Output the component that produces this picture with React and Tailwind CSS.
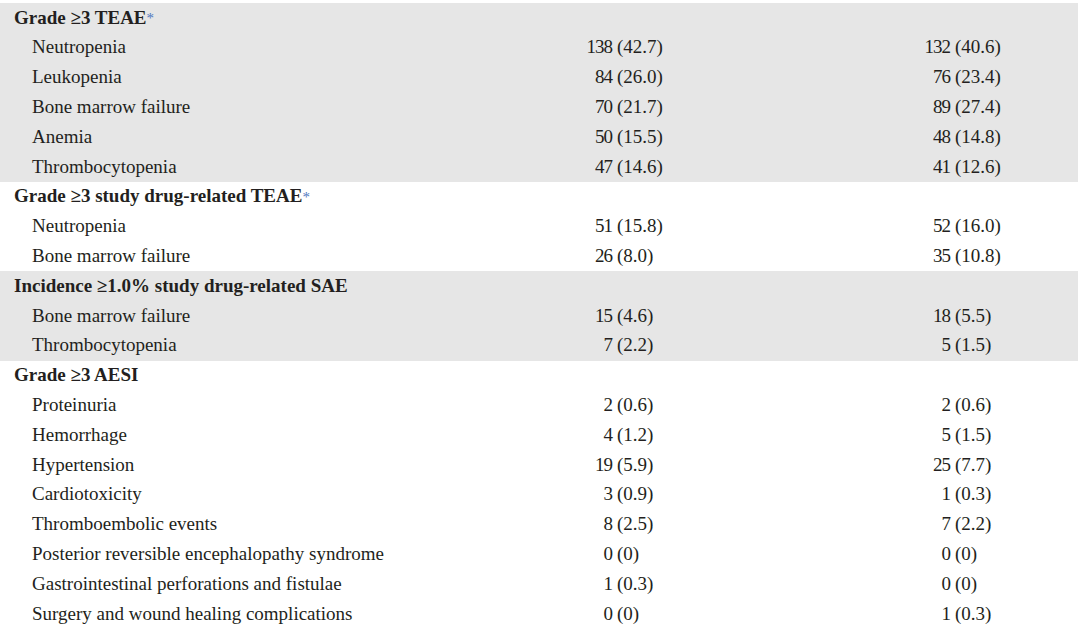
import React from 'react';

const sections = [
  {
    title: 'Grade \u22653 TEAE',
    star: true,
    shaded: true,
    rows: [
      ['Neutropenia', '138', '42.7', '132', '40.6'],
      ['Leukopenia', '84', '26.0', '76', '23.4'],
      ['Bone marrow failure', '70', '21.7', '89', '27.4'],
      ['Anemia', '50', '15.5', '48', '14.8'],
      ['Thrombocytopenia', '47', '14.6', '41', '12.6'],
    ],
  },
  {
    title: 'Grade \u22653 study drug-related TEAE',
    star: true,
    shaded: false,
    rows: [
      ['Neutropenia', '51', '15.8', '52', '16.0'],
      ['Bone marrow failure', '26', '8.0', '35', '10.8'],
    ],
  },
  {
    title: 'Incidence \u22651.0% study drug-related SAE',
    star: false,
    shaded: true,
    rows: [
      ['Bone marrow failure', '15', '4.6', '18', '5.5'],
      ['Thrombocytopenia', '7', '2.2', '5', '1.5'],
    ],
  },
  {
    title: 'Grade \u22653 AESI',
    star: false,
    shaded: false,
    rows: [
      ['Proteinuria', '2', '0.6', '2', '0.6'],
      ['Hemorrhage', '4', '1.2', '5', '1.5'],
      ['Hypertension', '19', '5.9', '25', '7.7'],
      ['Cardiotoxicity', '3', '0.9', '1', '0.3'],
      ['Thromboembolic events', '8', '2.5', '7', '2.2'],
      ['Posterior reversible encephalopathy syndrome', '0', '0', '0', '0'],
      ['Gastrointestinal perforations and fistulae', '1', '0.3', '0', '0'],
      ['Surgery and wound healing complications', '0', '0', '1', '0.3'],
    ],
  },
];

// count is right-aligned, percentage starts at the bracket so the brackets line up
const Cell = ({ n, pct, pctWidth }) => (
  <>
    <span className="w-[72px] text-right tracking-[-1px]">{n}</span>
    <span className={`pl-[5px] ${pctWidth}`}>({pct})</span>
  </>
);

export default function App() {
  return (
    <div
      className="w-[1080px] h-[628px] overflow-hidden bg-white pt-[3px] text-[19px] text-[#231f20]"
      style={{ fontFamily: '"Liberation Serif", "Times New Roman", serif' }}
    >
      <div className="w-[1078px]">
        {sections.map((sec) => (
          <div key={sec.title} className={sec.shaded ? 'bg-[#e6e6e6]' : 'bg-white'}>
            <div className="h-[29.8px] flex items-center pl-[14px] font-bold">
              {sec.title}
              {sec.star && <span className="text-[#5078c0] font-normal text-[15px] self-start mt-[4px]">*</span>}
            </div>
            {sec.rows.map(([label, a, ap, b, bp]) => (
              <div key={label} className="h-[29.8px] flex items-center">
                <span className="w-[540px] pl-[32px]">{label}</span>
                <Cell n={a} pct={ap} pctWidth="w-[266px]" />
                <Cell n={b} pct={bp} pctWidth="w-[126px]" />
              </div>
            ))}
          </div>
        ))}
      </div>
    </div>
  );
}
